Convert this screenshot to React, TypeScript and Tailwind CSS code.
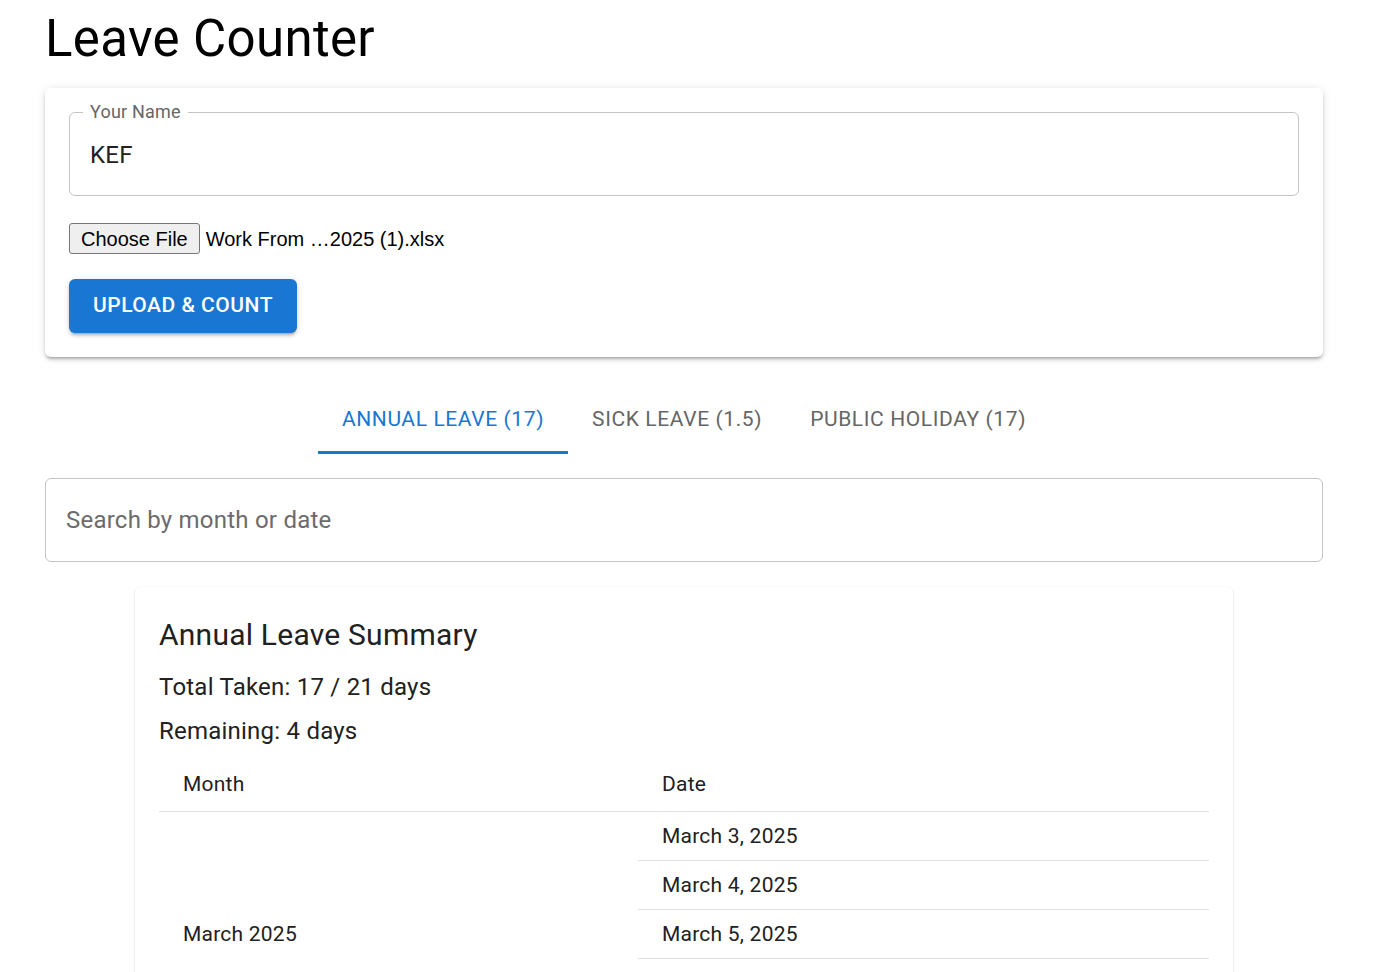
import React from "react";

const roboto = { fontFamily: "Roboto, 'Liberation Sans', sans-serif" };

export default function App() {
  const dates = ["March 3, 2025", "March 4, 2025", "March 5, 2025", "March 6, 2025", "March 7, 2025"];
  return (
    <div className="min-h-screen bg-white text-[#212121]" style={roboto}>
      <div className="ml-[45px] w-[1278px]">
        <h1 className="mt-[7px] mb-[18px] text-[51px] leading-[63px] font-normal tracking-[0.34px] text-black">Leave Counter</h1>

        <div className="rounded-[6px] bg-white p-[24px] shadow-[0_3px_2px_-2px_rgba(0,0,0,0.2),0_3px_3px_0_rgba(0,0,0,0.14),0_1px_8px_0_rgba(0,0,0,0.12)]">
          <div className="relative h-[84px] rounded-[6px] border border-[#c4c4c4]">
            <span className="absolute left-[13px] top-[-12px] bg-white px-[7px] text-[18px] leading-[22px] tracking-[0.2px] text-[#666666]">Your Name</span>
            <div className="flex h-full items-center pl-[20px] pt-[1px] text-[24px] tracking-[0.225px] text-[#212121]">KEF</div>
          </div>

          <div className="mt-[27px] flex items-center" style={{ fontFamily: "'Liberation Sans', Arial, sans-serif" }}>
            <button className="h-[31px] rounded-[3px] border border-[#767676] bg-[#efefef] px-[11px] text-[20px] leading-none text-black">Choose File</button>
            <span className="ml-[6px] text-[20px] text-black">Work From …2025 (1).xlsx</span>
          </div>

          <button className="mt-[25px] h-[54px] rounded-[6px] bg-[#1976d2] px-[24px] text-[21px] font-medium tracking-[0.5px] text-white shadow-[0_4px_2px_-3px_rgba(0,0,0,0.2),0_3px_3px_0_rgba(0,0,0,0.14),0_1px_7px_0_rgba(0,0,0,0.12)]">
            UPLOAD &amp; COUNT
          </button>
        </div>

        <div className="mt-[25px] flex justify-center">
          <div className="flex h-[72px]">
            <div className="flex h-full items-center border-b-[3px] border-[#1976d2] px-[24px] pt-[7px] text-[21px] font-normal tracking-[0.6px] text-[#1976d2]">ANNUAL LEAVE (17)</div>
            <div className="flex h-full items-center px-[24px] pt-[4px] text-[21px] font-normal tracking-[0.6px] text-[#666666]">SICK LEAVE (1.5)</div>
            <div className="flex h-full items-center px-[24px] pt-[4px] text-[21px] font-normal tracking-[0.6px] text-[#666666]">PUBLIC HOLIDAY (17)</div>
          </div>
        </div>

        <div className="mt-[24px] flex h-[84px] items-center rounded-[6px] border border-[#c4c4c4] pl-[20px] text-[24px] tracking-[0.225px] text-[#6b6b6b]">
          Search by month or date
        </div>

        <div className="mx-auto mt-[25px] w-[1098px] rounded-[6px] bg-white p-[24px] shadow-[0_2px_1px_-1px_rgba(0,0,0,0.2),0_1px_1px_0_rgba(0,0,0,0.14),0_1px_3px_0_rgba(0,0,0,0.12)]">
          <h2 className="mb-[10px] text-[30px] leading-[48px] font-normal tracking-[0.225px]">Annual Leave Summary</h2>
          <p className="mb-[8px] text-[24px] leading-[36px] tracking-[0.225px]">Total Taken: 17 / 21 days</p>
          <p className="mb-[8px] text-[24px] leading-[36px] tracking-[0.225px]">Remaining: 4 days</p>
          <table className="mt-[4px] w-full border-collapse text-[21px] leading-[30px] tracking-[0.225px]">
            <thead>
              <tr className="border-b border-[#e0e0e0]">
                <th className="w-[479px] px-[24px] pt-[12px] pb-[12px] text-left font-normal">Month</th>
                <th className="px-[24px] pt-[12px] pb-[12px] text-left font-normal">Date</th>
              </tr>
            </thead>
            <tbody>
              {dates.map((d, i) => (
                <tr key={d}>
                  {i === 0 && (
                    <td rowSpan={dates.length} className="border-b border-[#e0e0e0] px-[24px] align-middle">March 2025</td>
                  )}
                  <td className="border-b border-[#e0e0e0] px-[24px] py-[9px]">{d}</td>
                </tr>
              ))}
            </tbody>
          </table>
        </div>
        <div className="h-[40px]" />
      </div>
    </div>
  );
}
